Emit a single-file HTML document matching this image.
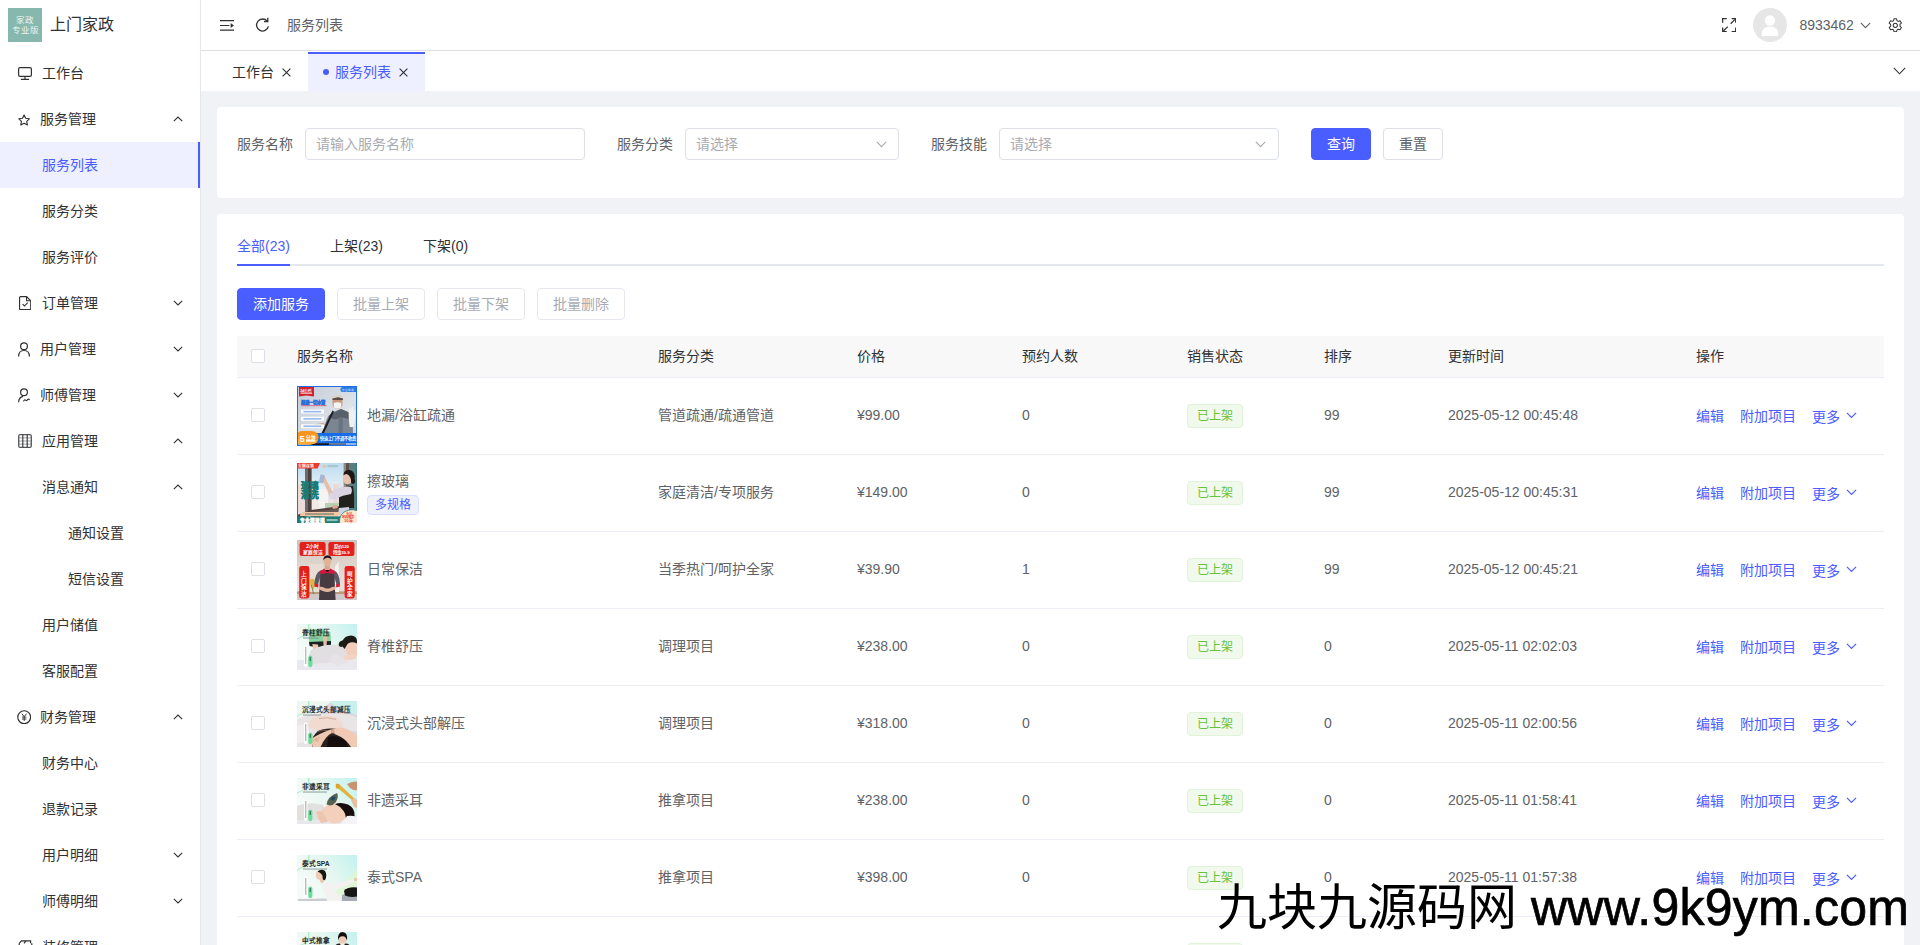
<!DOCTYPE html>
<html lang="zh-CN">
<head>
<meta charset="utf-8">
<title>服务列表</title>
<style>
*{box-sizing:border-box;margin:0;padding:0}
html,body{width:1920px;height:945px;overflow:hidden;background:#f0f2f5}
body{font-family:"Liberation Sans",sans-serif;font-size:14px;color:#303133;position:relative}
svg{display:block}
.abs{position:absolute}
/* ---------- sidebar ---------- */
#side{position:absolute;left:0;top:0;width:201px;height:945px;background:#fff;border-right:1px solid #e4e7ed;overflow:hidden}
#logo{position:absolute;left:8px;top:8px;width:34px;height:34px;background:#86b8ae;color:#eaf4f1;font-size:8.5px;line-height:10.2px;text-align:center;padding-top:6.7px;overflow:hidden;white-space:nowrap}
#brand{position:absolute;left:50px;top:0;height:50px;line-height:49px;font-size:16px;color:#303133;white-space:nowrap}
.mi{position:absolute;left:0;width:200px;height:46px;line-height:46px;font-size:14px;color:#303133;white-space:nowrap}
.mi .ic{position:absolute;top:15px}
.mi .tx{position:absolute;top:0}
.mi .ar{position:absolute;left:173px;top:20px}
.mi.on{background:#eef0ff;color:#4a5dff;border-right:2px solid #4a5dff}
/* ---------- header ---------- */
#head{position:absolute;left:201px;top:0;width:1719px;height:51px;background:#fff;border-bottom:1px solid #dcdfe6}
#tabs{position:absolute;left:201px;top:51px;width:1719px;height:40px;background:#fff}
.tab{position:absolute;top:0;height:40px;line-height:42px;font-size:14px;white-space:nowrap;color:#303133}
.tab.on{top:1px;background:#eef0ff;color:#4a5dff;border-top:2px solid #4a5dff;line-height:36px}
/* ---------- cards ---------- */
.card{position:absolute;left:217px;width:1687px;background:#fff;border-radius:4px}
.lbl{position:absolute;top:128px;height:32px;line-height:32px;font-size:14px;color:#606266;white-space:nowrap}
.inp{position:absolute;top:128px;height:32px;border:1px solid #dcdfe6;border-radius:4px;background:#fff;line-height:30px;font-size:14px;color:#a8abb2;padding-left:10px;white-space:nowrap}
.btn{position:absolute;height:32px;line-height:30px;border:1px solid #dcdfe6;border-radius:4px;font-size:14px;text-align:center;color:#606266;background:#fff;white-space:nowrap}
.btn.pri{background:#4a5dff;border-color:#4a5dff;color:#fff}
.btn.dis{color:#a8abb2;border-color:#e4e7ed}
/* ---------- table ---------- */
#thead{position:absolute;left:237px;top:336px;width:1647px;height:42px;background:#f8f8f9;border-bottom:1px solid #ebeef5}
.th{position:absolute;top:0;height:41px;line-height:40px;font-size:14px;color:#303133;white-space:nowrap}
.row{position:absolute;left:237px;width:1647px;height:77px;border-bottom:1px solid #ebeef5;font-size:14px;color:#606266}
.row .c{position:absolute;top:0;height:74px;line-height:74px;white-space:nowrap}
.cb{position:absolute;width:14px;height:14px;border:1px solid #dcdfe6;border-radius:2px;background:#fff}
.tag{position:absolute;left:950px;top:26px;width:56px;height:24px;line-height:22px;border:1px solid #e1f3d8;background:#f0f9eb;color:#67c23a;font-size:12px;text-align:center;border-radius:4px}
.lk{color:#4a5dff}
.thumb{position:absolute;left:60px;width:60px;overflow:hidden}
#wm{position:absolute;left:1217px;top:876px;font-size:50px;line-height:64px;color:#000;white-space:nowrap}
#wl{position:absolute;left:314px;top:0;display:block;letter-spacing:0.23px;-webkit-text-stroke:0.7px #000;transform:scale(1,1.04);transform-origin:0 50.3px}
</style>
</head>
<body>

<!-- ================= SIDEBAR ================= -->
<div id="side">
  <div id="logo">家政<br>专业版</div>
  <div id="brand">上门家政</div>
  <div class="mi" style="top:50px"><svg class="ic" style="left:18px;top:17px" width="14" height="13" viewBox="0 0 14 13"><rect x="0.6" y="0.6" width="12.8" height="8.7" rx="1.4" fill="none" stroke="#303133" stroke-width="1.2"/><path d="M7 9.4 V12.2 M2.9 12.3 H11.1" fill="none" stroke="#303133" stroke-width="1.2"/></svg><span class="tx" style="left:42px">工作台</span></div>
  <div class="mi" style="top:96px"><svg class="ic" style="left:18px;top:17.6px" width="12.2" height="12.2" viewBox="0 0 13 13"><path d="M6.5 1 L8.2 4.6 L12.1 5.1 L9.3 7.8 L10 11.7 L6.5 9.8 L3 11.7 L3.7 7.8 L0.9 5.1 L4.8 4.6 Z" fill="none" stroke="#303133" stroke-width="1.2" stroke-linejoin="round"/></svg><span class="tx" style="left:40px">服务管理</span><svg class="ar" width="10" height="6" viewBox="0 0 10 6"><path d="M0.8 5.2 L5 1 L9.2 5.2" fill="none" stroke="#303133" stroke-width="1.1"/></svg></div>
  <div class="mi on" style="top:142px"><span class="tx" style="left:42px">服务列表</span></div>
  <div class="mi" style="top:188px"><span class="tx" style="left:42px">服务分类</span></div>
  <div class="mi" style="top:234px"><span class="tx" style="left:42px">服务评价</span></div>
  <div class="mi" style="top:280px"><svg class="ic" style="left:19px;top:16px" width="12.3" height="14.2" viewBox="0 0 13 15"><path d="M0.6 1.6 Q0.6 0.6 1.6 0.6 H8 L12.4 5 V13.4 Q12.4 14.4 11.4 14.4 H1.6 Q0.6 14.4 0.6 13.4 Z" fill="none" stroke="#303133" stroke-width="1.2"/><path d="M8 0.6 V5 H12.4" fill="none" stroke="#303133" stroke-width="1.2"/><path d="M3.8 8.6 L5.8 10.6 L9.2 7" fill="none" stroke="#303133" stroke-width="1.2"/></svg><span class="tx" style="left:42px">订单管理</span><svg class="ar" width="10" height="6" viewBox="0 0 10 6"><path d="M0.8 0.8 L5 5 L9.2 0.8" fill="none" stroke="#303133" stroke-width="1.1"/></svg></div>
  <div class="mi" style="top:326px"><svg class="ic" style="left:17px;top:16px" width="14" height="15" viewBox="0 0 14 15"><circle cx="7" cy="4.2" r="3.4" fill="none" stroke="#303133" stroke-width="1.2"/><path d="M1.6 14.4 Q1.6 8.5 7 8.5 Q12.4 8.5 12.4 14.4" fill="none" stroke="#303133" stroke-width="1.2"/></svg><span class="tx" style="left:40px">用户管理</span><svg class="ar" width="10" height="6" viewBox="0 0 10 6"><path d="M0.8 0.8 L5 5 L9.2 0.8" fill="none" stroke="#303133" stroke-width="1.1"/></svg></div>
  <div class="mi" style="top:372px"><svg class="ic" style="left:17px;top:16px" width="14" height="15" viewBox="0 0 14 15"><circle cx="7" cy="4.2" r="3.4" fill="none" stroke="#303133" stroke-width="1.2"/><path d="M1.6 14.2 Q1.8 9.2 6 8.3" fill="none" stroke="#303133" stroke-width="1.2"/><path d="M6.4 13.4 Q7.4 11 8.6 12.2 Q9.6 13.2 10.6 11.6 Q11.6 10.4 12.6 12" fill="none" stroke="#303133" stroke-width="1.1"/></svg><span class="tx" style="left:40px">师傅管理</span><svg class="ar" width="10" height="6" viewBox="0 0 10 6"><path d="M0.8 0.8 L5 5 L9.2 0.8" fill="none" stroke="#303133" stroke-width="1.1"/></svg></div>
  <div class="mi" style="top:418px"><svg class="ic" style="left:18px;top:16px" width="14" height="14" viewBox="0 0 14 14"><rect x="0.7" y="0.7" width="12.6" height="12.6" rx="1.4" fill="none" stroke="#55575c" stroke-width="1.3"/><path d="M4.8 0.7 V13.3 M9.2 0.7 V13.3" fill="none" stroke="#303133" stroke-width="1.1"/><path d="M0.7 3.9 H13.3 M0.7 7 H13.3 M0.7 10.1 H13.3" fill="none" stroke="#303133" stroke-width="0.6" opacity="0.75"/></svg><span class="tx" style="left:42px">应用管理</span><svg class="ar" width="10" height="6" viewBox="0 0 10 6"><path d="M0.8 5.2 L5 1 L9.2 5.2" fill="none" stroke="#303133" stroke-width="1.1"/></svg></div>
  <div class="mi" style="top:464px"><span class="tx" style="left:42px">消息通知</span><svg class="ar" width="10" height="6" viewBox="0 0 10 6"><path d="M0.8 5.2 L5 1 L9.2 5.2" fill="none" stroke="#303133" stroke-width="1.1"/></svg></div>
  <div class="mi" style="top:510px"><span class="tx" style="left:68px">通知设置</span></div>
  <div class="mi" style="top:556px"><span class="tx" style="left:68px">短信设置</span></div>
  <div class="mi" style="top:602px"><span class="tx" style="left:42px">用户储值</span></div>
  <div class="mi" style="top:648px"><span class="tx" style="left:42px">客服配置</span></div>
  <div class="mi" style="top:694px"><svg class="ic" style="left:17px;top:16px" width="14.4" height="14.4" viewBox="0 0 15 15"><circle cx="7.5" cy="7.5" r="6.7" fill="none" stroke="#303133" stroke-width="1.2"/><path d="M5 3.8 L7.5 7 L10 3.8 M7.5 7 V11.4 M5.2 7.4 H9.8 M5.2 9.4 H9.8" fill="none" stroke="#303133" stroke-width="1"/></svg><span class="tx" style="left:40px">财务管理</span><svg class="ar" width="10" height="6" viewBox="0 0 10 6"><path d="M0.8 5.2 L5 1 L9.2 5.2" fill="none" stroke="#303133" stroke-width="1.1"/></svg></div>
  <div class="mi" style="top:740px"><span class="tx" style="left:42px">财务中心</span></div>
  <div class="mi" style="top:786px"><span class="tx" style="left:42px">退款记录</span></div>
  <div class="mi" style="top:832px"><span class="tx" style="left:42px">用户明细</span><svg class="ar" width="10" height="6" viewBox="0 0 10 6"><path d="M0.8 0.8 L5 5 L9.2 0.8" fill="none" stroke="#303133" stroke-width="1.1"/></svg></div>
  <div class="mi" style="top:878px"><span class="tx" style="left:42px">师傅明细</span><svg class="ar" width="10" height="6" viewBox="0 0 10 6"><path d="M0.8 0.8 L5 5 L9.2 0.8" fill="none" stroke="#303133" stroke-width="1.1"/></svg></div>
  <div class="mi" style="top:924px"><svg class="ic" style="left:18px;top:16px" width="15" height="15" viewBox="0 0 15 15"><path d="M1.2 3.4 V13.8 H13.8 V3.2 M1.2 3.4 L3.4 0.9 H12.6 V3.2 M8 0.9 L6 3.4" fill="none" stroke="#303133" stroke-width="1.2"/></svg><span class="tx" style="left:42px">装修管理</span></div>
</div>

<!-- ================= HEADER ================= -->
<div id="head">
  <svg class="abs" style="left:19px;top:18px" width="14" height="14" viewBox="0 0 14 14"><path d="M0 2.6 H14 M0 7.5 H9.4 M0 12.2 H14" fill="none" stroke="#303133" stroke-width="1.2"/><path d="M10.6 5 L14 7.5 L10.6 10 Z" fill="#303133"/></svg>
  <svg class="abs" style="left:54px;top:17px" width="15" height="16" viewBox="0 0 15 16"><path d="M12.2 4.2 A6 6 0 1 0 13.4 9.4" fill="none" stroke="#303133" stroke-width="1.3"/><path d="M12.8 0.8 V4.6 H9" fill="none" stroke="#303133" stroke-width="1.3"/></svg>
  <div class="abs" style="left:86px;top:0;height:50px;line-height:50px;font-size:14px;color:#606266;white-space:nowrap">服务列表</div>
  <svg class="abs" style="left:1521px;top:18px" width="14.4" height="14.4" viewBox="0 0 15 15"><path d="M0.7 5 V0.7 H5 M10 0.7 H14.3 V5 M14.3 10 V14.3 H10 M5 14.3 H0.7 V10" fill="none" stroke="#303133" stroke-width="1.3"/><path d="M9 6 L13.6 1.4 M6 9 L1.4 13.6" fill="none" stroke="#303133" stroke-width="1.3"/></svg>
  <div class="abs" style="left:1552px;top:8px;width:34px;height:34px;border-radius:50%;background:#e6e6e6;overflow:hidden">
    <svg width="34" height="34" viewBox="0 0 34 34"><circle cx="17" cy="12.5" r="5.2" fill="#fff"/><path d="M8.5 27 Q8.5 18.5 17 18.5 Q25.5 18.5 25.5 27 Q25.5 28 24.5 28 H9.5 Q8.5 28 8.5 27Z" fill="#fff"/></svg>
  </div>
  <div class="abs" style="left:1598.4px;top:0;height:50px;line-height:50px;font-size:14px;color:#606266">8933462</div>
  <svg class="abs" style="left:1659px;top:22px" width="11" height="7" viewBox="0 0 11 7"><path d="M0.8 0.8 L5.5 5.6 L10.2 0.8" fill="none" stroke="#606266" stroke-width="1.1"/></svg>
  <svg class="abs" style="left:1687.4px;top:17.6px" width="14.6" height="14.6" viewBox="0 0 16 16"><path d="M6.6 0.9 H9.4 L9.9 3 L11.2 3.7 L13.2 3 L14.7 5.5 L13.1 7 V8.9 L14.7 10.5 L13.2 13 L11.2 12.3 L9.9 13 L9.4 15.1 H6.6 L6.1 13 L4.8 12.3 L2.8 13 L1.3 10.5 L2.9 8.9 V7 L1.3 5.5 L2.8 3 L4.8 3.7 L6.1 3 Z" fill="none" stroke="#303133" stroke-width="1.1" stroke-linejoin="round"/><circle cx="8" cy="8" r="2.3" fill="none" stroke="#303133" stroke-width="1.1"/></svg>
</div>
<div id="tabs">
  <div class="tab" style="left:31px">工作台<svg style="display:inline-block;vertical-align:0.5px;margin-left:8px" width="9" height="9" viewBox="0 0 9 9"><path d="M0.6 0.6 L8.4 8.4 M8.4 0.6 L0.6 8.4" fill="none" stroke="#303133" stroke-width="1.15"/></svg></div>
  <div class="tab on" style="left:107px;width:117px;padding-left:15px"><span style="display:inline-block;width:6px;height:6px;border-radius:50%;background:#4a5dff;vertical-align:2px;margin-right:6px"></span>服务列表<svg style="display:inline-block;vertical-align:0.5px;margin-left:8px" width="9" height="9" viewBox="0 0 9 9"><path d="M0.6 0.6 L8.4 8.4 M8.4 0.6 L0.6 8.4" fill="none" stroke="#303133" stroke-width="1.15"/></svg></div>
  <svg class="abs" style="left:1692px;top:16px" width="13" height="8" viewBox="0 0 13 8"><path d="M0.8 0.8 L6.5 6.8 L12.2 0.8" fill="none" stroke="#303133" stroke-width="1.1"/></svg>
</div>

<!-- ================= SEARCH CARD ================= -->
<div class="card" style="top:107px;height:91px"></div>

<div class="lbl" style="left:237px">服务名称</div>
<div class="inp" style="left:305px;width:280px">请输入服务名称</div>
<div class="lbl" style="left:617px">服务分类</div>
<div class="inp" style="left:685px;width:214px;padding-left:10px">请选择<svg class="abs" style="right:11px;top:12px" width="11" height="7" viewBox="0 0 11 7"><path d="M0.8 0.8 L5.5 5.6 L10.2 0.8" fill="none" stroke="#a8abb2" stroke-width="1.1"/></svg></div>
<div class="lbl" style="left:931px">服务技能</div>
<div class="inp" style="left:999px;width:280px;padding-left:10px">请选择<svg class="abs" style="right:12.5px;top:12px" width="11" height="7" viewBox="0 0 11 7"><path d="M0.8 0.8 L5.5 5.6 L10.2 0.8" fill="none" stroke="#a8abb2" stroke-width="1.1"/></svg></div>
<div class="btn pri" style="left:1311px;top:128px;width:60px">查询</div>
<div class="btn" style="left:1383px;top:128px;width:60px">重置</div>


<!-- ================= LIST CARD ================= -->
<div class="card" style="top:214px;height:760px"></div>

<div class="abs" style="left:237px;top:264px;width:1647px;height:2px;background:#e4e7ed"></div>
<div class="abs" style="left:237px;top:264px;width:53px;height:2px;background:#4a5dff"></div>
<div class="abs" style="left:237px;top:234px;height:24px;line-height:24px;font-size:14px;color:#4a5dff;white-space:nowrap">全部(23)</div>
<div class="abs" style="left:330px;top:234px;height:24px;line-height:24px;font-size:14px;color:#303133;white-space:nowrap">上架(23)</div>
<div class="abs" style="left:423px;top:234px;height:24px;line-height:24px;font-size:14px;color:#303133;white-space:nowrap">下架(0)</div>
<div class="btn pri" style="left:237px;top:288px;width:88px">添加服务</div>
<div class="btn dis" style="left:337px;top:288px;width:88px">批量上架</div>
<div class="btn dis" style="left:437px;top:288px;width:88px">批量下架</div>
<div class="btn dis" style="left:537px;top:288px;width:88px">批量删除</div>
<div id="thead">
  <div class="cb" style="left:14px;top:13px"></div>
  <div class="th" style="left:60px">服务名称</div>
  <div class="th" style="left:421px">服务分类</div>
  <div class="th" style="left:620px">价格</div>
  <div class="th" style="left:785px">预约人数</div>
  <div class="th" style="left:950px">销售状态</div>
  <div class="th" style="left:1087px">排序</div>
  <div class="th" style="left:1211px">更新时间</div>
  <div class="th" style="left:1459px">操作</div>
</div>
<div class="row" style="top:378px"><div class="cb" style="left:14px;top:30px"></div><div class="thumb" style="top:8px;height:60px"><svg width="60" height="60" viewBox="0 0 60 60"><defs><filter id="b16933" x="-5%" y="-5%" width="110%" height="110%"><feGaussianBlur stdDeviation="0.45"/></filter>
<linearGradient id="t1g" x1="0" y1="0" x2="1" y2="1"><stop offset="0" stop-color="#c3ccd9"/><stop offset="0.6" stop-color="#dde1e8"/><stop offset="1" stop-color="#cfd5de"/></linearGradient>
</defs>
<rect width="60" height="60" fill="#1e6fe3"/>
<rect x="1" y="1" width="58" height="58" fill="url(#t1g)"/>
<g filter="url(#b16933)">
 <path d="M26.6 47 Q28 31 35 26.4 L44 23 L52 26.6 Q56 30 56 47 Z" fill="#7b8592"/>
 <path d="M33 28.4 L44 23 L52 26.6 Q54.6 29 55 34 L46 31.6 L38 33.6 L31.6 31.6 Z" fill="#59606b"/>
 <path d="M41.6 31 L46 31.4 L45.6 47 L41.6 47 Z" fill="#6a7380"/>
 <path d="M35.5 24.5 L37 25.5 L27 47 L24.5 47 Z" fill="#1d1f24"/>
 <rect x="35.5" y="9.5" width="10" height="13" rx="4.5" fill="#c89a7c"/>
 <path d="M34.5 13 Q35 8.6 40.5 8.4 Q46 8.6 46.3 12.6 L41 11.4 Z" fill="#d9d4cb"/>
 <path d="M35.3 12.4 L41 11.2 L46 12.6 L46 14 L35.5 14 Z" fill="#5b5148"/>
 <path d="M36.6 17 Q40.5 15.6 44.4 17 L44 21.6 Q40.5 23.6 37 21.6 Z" fill="#f4f4f2"/>
 <path d="M51.6 24 Q52 21 53.4 21.6 L54 25 L54.8 20.6 Q56 20 56.4 21.6 L56.8 25 L57.6 23 Q58.6 23 58.4 25 L58 34 Q58 39 56.4 41 L52.6 41 Q51.4 32 51.6 24 Z" fill="#f0f0ee"/>
 <path d="M17 38.6 L27 36.8 L28 38.8 L19 40.6 Z" fill="#c9a58f"/>
</g>
<path d="M2 1 H17 V10.6 L9.5 9.4 L2 10.6 Z" fill="#d3202c"/>
<text x="3.2" y="5.6" font-size="3.6" fill="#fff" font-family="Liberation Sans,sans-serif" font-weight="700">24小时</text>
<rect x="3.6" y="6.6" width="11.4" height="1" fill="#fff"/>
<path d="M46 1 H59 V6 H46 Q43.4 6 43.4 3.5 Q43.4 1 46 1Z" fill="#2b7ae6"/>
<text x="45" y="4.8" font-size="2.6" fill="#dbe9ff" font-family="Liberation Sans,sans-serif">专业疏通</text>
<text x="3.6" y="18" font-size="4.4" fill="#2a6fd9" stroke="#2a6fd9" stroke-width="0.3" font-family="Liberation Sans,sans-serif" font-weight="700">疏通一切水管</text>
<rect x="4" y="19.4" width="25.6" height="0.7" fill="#e0485a"/>
<rect x="4" y="23.6" width="23" height="4" rx="0.6" fill="#fff"/><rect x="6.4" y="24.8" width="18" height="1.7" fill="#9cbcf0"/>
<rect x="4" y="30.8" width="23" height="4" rx="0.6" fill="#fff"/><rect x="6.4" y="32" width="18" height="1.7" fill="#9cbcf0"/>
<rect x="4" y="38.2" width="23" height="4" rx="0.6" fill="#fff" opacity="0.92"/><rect x="6.4" y="39.4" width="18" height="1.7" fill="#9cbcf0"/>
<rect x="1" y="47" width="58" height="10.4" fill="#176de8"/>
<rect x="1" y="57.2" width="58" height="1.8" fill="#8fb6ef"/><rect x="14" y="57.2" width="18" height="1.8" fill="#10141c"/><rect x="32" y="57.2" width="17" height="1.8" fill="#5f7187"/>
<path d="M1 47.6 Q1 45 5 45 H14 Q21.6 45.4 21.6 51.6 Q21.4 58.2 14 58.4 H3 Q1 58.4 1 56.6 Z" fill="#f7941d"/>
<path d="M1 53 Q12 57 21 53.6 Q20 58.2 14 58.4 H3 Q1 58.4 1 56.6Z" fill="#fbb03b" opacity="0.8"/>
<text x="2.4" y="56" font-size="9.4" fill="#fff" font-family="Liberation Sans,sans-serif" font-weight="700">5</text>
<text x="8.6" y="52.6" font-size="4.6" fill="#fff" font-family="Liberation Sans,sans-serif" font-weight="700">分钟</text>
<rect x="9" y="53.6" width="9.4" height="2.2" rx="0.5" fill="#fff" opacity="0.9"/>
<text x="22.6" y="54.2" font-size="4.2" fill="#fff" font-family="Liberation Sans,sans-serif" font-weight="700">快速上门不通不收费</text>
</svg></div><div class="c" style="left:130px">地漏/浴缸疏通</div><div class="c" style="left:421px">管道疏通/疏通管道</div><div class="c" style="left:620px">¥99.00</div><div class="c" style="left:785px">0</div><div class="tag">已上架</div><div class="c" style="left:1087px">99</div><div class="c" style="left:1211px">2025-05-12 00:45:48</div><div class="c lk" style="left:1459px;top:1px">编辑</div><div class="c lk" style="left:1503px;top:1px">附加项目</div><div class="c lk" style="left:1575px;top:2px">更多<svg style="display:inline-block;margin-left:6px;vertical-align:4px" width="11" height="6.5" viewBox="0 0 10 6"><path d="M0.8 0.8 L5 5 L9.2 0.8" fill="none" stroke="#4a5dff" stroke-width="1.1"/></svg></div></div>
<div class="row" style="top:455px"><div class="cb" style="left:14px;top:30px"></div><div class="thumb" style="top:8px;height:60px"><svg width="60" height="60" viewBox="0 0 60 60"><defs><filter id="b39513" x="-5%" y="-5%" width="110%" height="110%"><feGaussianBlur stdDeviation="0.45"/></filter>
<linearGradient id="t2g" x1="0" y1="0" x2="0" y2="1"><stop offset="0" stop-color="#bcdcf1"/><stop offset="0.45" stop-color="#e9f1f5"/><stop offset="1" stop-color="#d7dfe0"/></linearGradient>
</defs>
<rect width="60" height="60" fill="url(#t2g)"/>
<g filter="url(#b39513)">
 <rect x="1" y="21" width="9" height="28" fill="#ecd9d6" opacity="0.9"/>
 <rect x="14" y="22" width="8" height="28" fill="#f1ebe8"/>
 <rect x="22" y="26" width="10" height="22" fill="#f4f3f1"/>
 <rect x="31" y="20" width="4" height="24" fill="#e6e4e6"/><rect x="36" y="21" width="5" height="22" fill="#edd8d6"/><rect x="41" y="20" width="4" height="22" fill="#dfe4ea"/>
 <rect x="28" y="40" width="14" height="6" fill="#b9d0b4"/>
 <rect x="8" y="5" width="3" height="45" fill="#6c6a6e"/><rect x="11" y="5" width="3.6" height="45" fill="#4d3f3c"/>
 <rect x="46.6" y="0" width="2.6" height="50" fill="#8d8a86"/><rect x="49" y="0" width="3" height="50" fill="#5f5048"/>
 <rect x="52" y="0" width="8" height="56" fill="#557f83"/>
 <path d="M0 52 L14 47 L44 43 L44 47 L14 52 L0 57 Z" fill="#54423f"/>
 <path d="M14 49 L44 45.6 L44 50 L14 56 Z" fill="#6b5a55"/>
 <!-- woman -->
 <path d="M42 31 Q42 24.6 48 24 L56 23 Q57.6 30 57 45 L42 45 Z" fill="#24201f"/>
 <path d="M32 30 Q40 24 50 23.4 L53.6 24 Q56 27 54 31 Q46 32 38 36 Q33 37 32 34 Z" fill="#d9d3e2"/>
 <path d="M24 14 L27.4 13 L36 30 L33 33.6 Z" fill="#e3bfae"/>
 <rect x="22.6" y="11.6" width="4.6" height="8.6" rx="1" fill="#a7b6d4" transform="rotate(12 25 16)"/>
 <path d="M32 34 Q32.6 30 35 29.6 L37 34.6 Q34 36.6 32 34Z" fill="#ddd6e4"/>
 <ellipse cx="50.6" cy="15.6" rx="4.6" ry="6" fill="#e9c2ae"/>
 <path d="M46.4 12 Q47 6.6 52.6 7 Q58.6 8.4 57.6 16 Q59.4 20 56 21 Q53.6 20.6 54 17 Q53 12 49.4 11 Z" fill="#1d1715"/>
 <path d="M42 45 L52 44 L52 52 L41 52 Z" fill="#cfd3e2"/>
 <path d="M35 43.4 Q37 41.4 40 42.4 L41 45 L36 46 Z" fill="#d8a892"/>
</g>
<text x="4.2" y="26.2" font-size="8.6" fill="#1c7a73" stroke="#1c7a73" stroke-width="0.45" font-family="Liberation Sans,sans-serif" font-weight="700">玻璃</text>
<text x="4.2" y="35" font-size="8.6" fill="#1c7a73" stroke="#1c7a73" stroke-width="0.45" font-family="Liberation Sans,sans-serif" font-weight="700">清洗</text>
<rect x="0" y="0" width="1" height="60" fill="#2c7c77"/><rect x="59.2" y="0" width="0.8" height="60" fill="#2c7c77"/>
<path d="M0 0 H23 L20.6 5.4 H0 Z" fill="#e93a2b"/>
<text x="1.4" y="4.4" font-size="3.8" fill="#fff" font-family="Liberation Sans,sans-serif" font-weight="700">全国连锁</text>
<circle cx="27.4" cy="3.2" r="1.8" fill="#f0c2a0"/><rect x="30.4" y="2" width="10.6" height="2.2" fill="#9fc3c7" opacity="0.8"/>
<path d="M3 53 Q3 49 7 49 H43 L41 53.4 Z" fill="#f6c7a6"/>
<rect x="8" y="50" width="29" height="2.1" fill="#8e8a78" opacity="0.75"/>
<rect x="0" y="53.4" width="60" height="6.6" fill="#1f7a72"/>
<text x="2.6" y="58.8" font-size="4.7" fill="#fff" stroke="#fff" stroke-width="0.25" font-family="Liberation Sans,sans-serif" font-weight="700">专业擦玻璃</text>
<rect x="29.6" y="56" width="11" height="2.2" fill="#8cc0ba"/>
<path d="M42.4 60 Q42 50 51 47.2 Q56 46 60 47.6 V60 Z" fill="#fbe9d3"/>
<path d="M42.4 60 Q42 50 51 47.2 Q56 46 60 47.6" fill="none" stroke="#2c7c77" stroke-width="0.8"/>
<text x="48.6" y="51.6" font-size="3.4" fill="#e8402f" font-family="Liberation Sans,sans-serif" font-weight="700">专注</text>
<text x="45" y="55.2" font-size="3.3" fill="#e8402f" font-family="Liberation Sans,sans-serif" font-weight="700">家政服务</text>
<text x="47" y="59.4" font-size="4.2" fill="#e8402f" font-family="Liberation Sans,sans-serif" font-weight="700">10年</text>
</svg></div><div class="c" style="left:130px;top:16px;height:20px;line-height:20px">擦玻璃</div><div class="abs" style="left:130px;top:40px;width:52px;height:20px;line-height:18px;border:1px solid #d9ddff;background:#eef0ff;color:#4a5dff;font-size:12px;text-align:center;border-radius:4px">多规格</div><div class="c" style="left:421px">家庭清洁/专项服务</div><div class="c" style="left:620px">¥149.00</div><div class="c" style="left:785px">0</div><div class="tag">已上架</div><div class="c" style="left:1087px">99</div><div class="c" style="left:1211px">2025-05-12 00:45:31</div><div class="c lk" style="left:1459px;top:1px">编辑</div><div class="c lk" style="left:1503px;top:1px">附加项目</div><div class="c lk" style="left:1575px;top:2px">更多<svg style="display:inline-block;margin-left:6px;vertical-align:4px" width="11" height="6.5" viewBox="0 0 10 6"><path d="M0.8 0.8 L5 5 L9.2 0.8" fill="none" stroke="#4a5dff" stroke-width="1.1"/></svg></div></div>
<div class="row" style="top:532px"><div class="cb" style="left:14px;top:30px"></div><div class="thumb" style="top:8px;height:60px"><svg width="60" height="60" viewBox="0 0 60 60"><defs><filter id="b50849" x="-5%" y="-5%" width="110%" height="110%"><feGaussianBlur stdDeviation="0.45"/></filter>
<linearGradient id="t3g" x1="0" y1="0" x2="0" y2="1"><stop offset="0" stop-color="#c9c3c1"/><stop offset="0.35" stop-color="#ddd3cb"/><stop offset="0.8" stop-color="#e9e0d7"/><stop offset="1" stop-color="#d6cdc9"/></linearGradient>
</defs>
<rect width="60" height="60" fill="url(#t3g)"/>
<g filter="url(#b50849)">
 <rect x="0" y="51.4" width="60" height="3" fill="#b89a7c"/><rect x="0" y="54.4" width="60" height="5.6" fill="#cfc9cc"/>
 <rect x="12" y="24" width="14" height="28" fill="#e7ddd4"/>
 <path d="M38 27 L41.6 21.6 L42 52 L37 52 Z" fill="#f7f4f0"/>
 <rect x="24" y="52" width="6" height="8" fill="#f1eeee"/>
 <path d="M12.6 40 Q15 37.6 17.6 40 Q19 45 16.6 49.6 Q13 49 12.6 40Z" fill="#d3bd4a"/>
 <path d="M14.4 45 L16.6 54" stroke="#6f8a3a" stroke-width="0.9"/>
 <!-- man -->
 <path d="M17.4 44 Q18 33 23.4 30.6 L30.4 29 L37.4 30.6 Q42.4 33 43 44 L40 46.6 L37.6 38 L37.6 60 L22.6 60 L22.6 38 L20.6 46.6 Z" fill="#5e5868"/>
 <path d="M23.6 33 L37 33 L38.6 60 L22 60 Z" fill="#443b40"/>
 <path d="M22.6 31.6 L27.6 28.4 L30.4 31 L33.4 28.4 L38 31.6 L36.6 34.6 L30.4 32.4 L24 34.6 Z" fill="#d8163c"/>
 <path d="M28.6 30.6 L30.4 32.6 L32.4 30.6 L31.4 29.4 L29.6 29.4 Z" fill="#1c181b"/>
 <path d="M17.6 43.4 L21.6 44.6 L21 47.6 L17.4 46.4 Z" fill="#dc1a3c"/><path d="M42.8 43.4 L38.8 44.6 L39.4 47.6 L43 46.4 Z" fill="#dc1a3c"/>
 <path d="M21.4 46.6 Q26 46.6 29 48.6 L32 48.6 Q35 46.6 39 46.6 L38 49.6 Q33 52.4 30.4 52 Q27 52.4 22.4 49.6 Z" fill="#e2b49c"/>
 <rect x="27.8" y="24" width="5" height="6" fill="#d5a78f"/>
 <ellipse cx="30.4" cy="21.6" rx="3.7" ry="4.8" fill="#e0b298"/>
 <path d="M26.4 20.6 Q26 15.4 30.6 15.2 Q35 15.4 34.6 20.6 Q33.6 17.6 30.4 17.8 Q27.4 17.6 26.4 20.6Z" fill="#1b1513"/>
</g>
<rect x="2.6" y="2" width="26" height="14" rx="2.2" fill="#e2211a"/>
<rect x="31.4" y="2" width="26" height="14" rx="2.2" fill="#e2211a"/>
<rect x="2.2" y="26" width="10.2" height="32.4" rx="2.4" fill="#e2211a"/>
<rect x="47.6" y="26" width="10.2" height="32.4" rx="2.4" fill="#e2211a"/>
<text x="15.6" y="8" font-size="4.8" fill="#fff" text-anchor="middle" font-family="Liberation Sans,sans-serif" font-weight="700">2小时</text>
<text x="15.6" y="14" font-size="4.8" fill="#fff" text-anchor="middle" font-family="Liberation Sans,sans-serif" font-weight="700">家庭保洁</text>
<text x="44.4" y="8" font-size="4.4" fill="#fff" text-anchor="middle" font-family="Liberation Sans,sans-serif" font-weight="700">原价120</text>
<text x="44.4" y="14" font-size="4.4" fill="#fff" text-anchor="middle" font-family="Liberation Sans,sans-serif" font-weight="700">特惠39.9</text>
<text x="7.3" y="36" font-size="5.6" fill="#fff" text-anchor="middle" font-family="Liberation Sans,sans-serif" font-weight="700">上</text>
<text x="7.3" y="42.6" font-size="5.6" fill="#fff" text-anchor="middle" font-family="Liberation Sans,sans-serif" font-weight="700">门</text>
<text x="7.3" y="49.2" font-size="5.6" fill="#fff" text-anchor="middle" font-family="Liberation Sans,sans-serif" font-weight="700">保</text>
<text x="7.3" y="55.8" font-size="5.6" fill="#fff" text-anchor="middle" font-family="Liberation Sans,sans-serif" font-weight="700">洁</text>
<text x="52.7" y="36" font-size="5.6" fill="#fff" text-anchor="middle" font-family="Liberation Sans,sans-serif" font-weight="700">呵</text>
<text x="52.7" y="42.6" font-size="5.6" fill="#fff" text-anchor="middle" font-family="Liberation Sans,sans-serif" font-weight="700">护</text>
<text x="52.7" y="49.2" font-size="5.6" fill="#fff" text-anchor="middle" font-family="Liberation Sans,sans-serif" font-weight="700">全</text>
<text x="52.7" y="55.8" font-size="5.6" fill="#fff" text-anchor="middle" font-family="Liberation Sans,sans-serif" font-weight="700">家</text>
</svg></div><div class="c" style="left:130px">日常保洁</div><div class="c" style="left:421px">当季热门/呵护全家</div><div class="c" style="left:620px">¥39.90</div><div class="c" style="left:785px">1</div><div class="tag">已上架</div><div class="c" style="left:1087px">99</div><div class="c" style="left:1211px">2025-05-12 00:45:21</div><div class="c lk" style="left:1459px;top:1px">编辑</div><div class="c lk" style="left:1503px;top:1px">附加项目</div><div class="c lk" style="left:1575px;top:2px">更多<svg style="display:inline-block;margin-left:6px;vertical-align:4px" width="11" height="6.5" viewBox="0 0 10 6"><path d="M0.8 0.8 L5 5 L9.2 0.8" fill="none" stroke="#4a5dff" stroke-width="1.1"/></svg></div></div>
<div class="row" style="top:609px"><div class="cb" style="left:14px;top:30px"></div><div class="thumb" style="top:15px;height:46px"><svg width="60" height="46" viewBox="0 0 60 46"><defs><filter id="b43770" x="-5%" y="-5%" width="110%" height="110%"><feGaussianBlur stdDeviation="0.45"/></filter>
<linearGradient id="lg4" x1="0" y1="0.55" x2="1" y2="0"><stop offset="0" stop-color="#f6fbf9"/><stop offset="0.5" stop-color="#e6f7f0"/><stop offset="1" stop-color="#c2f2ee"/></linearGradient>
</defs><rect width="60" height="46" fill="url(#lg4)"/><rect x="11" y="0" width="1.4" height="7" fill="#a9e8c6" opacity="0.9"/><path d="M0 14.6 L10 9.6 L10 10.8 L0 15.8 Z" fill="#a9e8c6" opacity="0.8"/>
<g filter="url(#b43770)">
 <rect x="0" y="36" width="60" height="10" fill="#e9e8ee"/>
 <path d="M11.4 6 Q22 3 33.4 8.6 L34 18 L12 19 Z" fill="#86d6a0"/>
 <path d="M12 18 L34 17 L34 21.6 Q23 25 12.6 22 Z" fill="#1e2422"/>
 <path d="M15.4 20 L21 20.6 L22.6 30 Q19.6 32.6 16.6 29 Z" fill="#efc5b1"/>
 <path d="M26 12 L30 12 L29.6 22 L26.6 22.6 Z" fill="#e9bfa9"/>
 <path d="M14 26 Q30 18 47 22 L50 30 Q44 36 36 38.6 L14 40 Q10 33 14 26 Z" fill="#e2dfe2"/>
 <path d="M36 30 Q46 32 52 38 L40 42 L33 37 Z" fill="#e6e2e6"/>
 <path d="M47.4 23 Q48 16.6 54 15.6 Q60 16 60 22 L60 32 Q54 35.6 50 31.4 Z" fill="#f1cdbb"/>
 <path d="M41.6 21 Q41.6 17 45.6 16.4 Q48 11.6 54 11.4 Q59.6 11.6 60 16.6 L60 19.6 Q55.6 16.8 51 19.4 Q49 22 47.6 25 Q46 23.6 45.6 22.6 Q42.6 23.6 41.6 21Z" fill="#1f1a19"/>
 <path d="M46 32 Q52 29.6 59 31 L59.6 34.6 Q53 37 47.6 35.6 Z" fill="#f3d3c3"/>
</g><text x="5.4" y="10.8" font-size="6.7" fill="#1d2a2c" font-family="Liberation Sans,sans-serif" font-weight="700">脊柱舒压</text><rect x="6" y="13.2" width="16" height="1.7" fill="#7d8b8b" opacity="0.5"/><rect x="7" y="21.4" width="3.4" height="21.6" rx="1.7" fill="#fff"/><rect x="8.2" y="23" width="1.1" height="17" fill="#8d9a96" opacity="0.8"/><rect x="11.2" y="31.6" width="4.2" height="11.6" rx="2.1" fill="#6cdc9a"/><rect x="12.6" y="33" width="1.4" height="4" fill="#2c5a44" opacity="0.7"/></svg></div><div class="c" style="left:130px">脊椎舒压</div><div class="c" style="left:421px">调理项目</div><div class="c" style="left:620px">¥238.00</div><div class="c" style="left:785px">0</div><div class="tag">已上架</div><div class="c" style="left:1087px">0</div><div class="c" style="left:1211px">2025-05-11 02:02:03</div><div class="c lk" style="left:1459px;top:1px">编辑</div><div class="c lk" style="left:1503px;top:1px">附加项目</div><div class="c lk" style="left:1575px;top:2px">更多<svg style="display:inline-block;margin-left:6px;vertical-align:4px" width="11" height="6.5" viewBox="0 0 10 6"><path d="M0.8 0.8 L5 5 L9.2 0.8" fill="none" stroke="#4a5dff" stroke-width="1.1"/></svg></div></div>
<div class="row" style="top:686px"><div class="cb" style="left:14px;top:30px"></div><div class="thumb" style="top:15px;height:46px"><svg width="60" height="46" viewBox="0 0 60 46"><defs><filter id="b15995" x="-5%" y="-5%" width="110%" height="110%"><feGaussianBlur stdDeviation="0.45"/></filter>
<linearGradient id="lg5" x1="0" y1="0.55" x2="1" y2="0"><stop offset="0" stop-color="#f6fbf9"/><stop offset="0.5" stop-color="#e6f7f0"/><stop offset="1" stop-color="#c2f2ee"/></linearGradient>
</defs><rect width="60" height="46" fill="#ddd7dc"/><path d="M30 0 H60 V14 Q46 10 30 0Z" fill="#c9f1ea"/><path d="M0 0 H34 L20 16 L0 22 Z" fill="#eef6f2"/>
<rect x="11" y="0" width="1.4" height="7" fill="#a9e8c6" opacity="0.9"/><path d="M0 14.6 L10 9.6 L10 10.8 L0 15.8 Z" fill="#a9e8c6" opacity="0.8"/>
<g filter="url(#b15995)">
 <path d="M0 18 Q14 12 34 13 Q52 11 60 17 L60 30 L0 36 Z" fill="#e9e4e5"/>
 <path d="M11 25 Q13 15 28 14.6 Q43 14.6 46 24 Q45 29 28 29.6 Q14 30 11 25Z" fill="#f1dbd0"/>
 <path d="M22 17.6 Q30 15.6 39 18.4" stroke="#c7a594" stroke-width="0.8" fill="none"/>
 <path d="M16 36 Q20 27.6 33 27.6 Q48 27 54 35 L57 46 L15 46 Z" fill="#2c2423"/>
 <path d="M31 36 Q40 33 49 40 L51 46 L30 46Z" fill="#15100f"/>
 <path d="M20 31 Q26 28 31 30" stroke="#6d5348" stroke-width="1.2" fill="none"/>
 <path d="M14.6 38 Q20 33.6 33.6 28.6 L35.4 31.6 Q28 35.6 23.6 46 L15.4 46 Z" fill="#efc8b2"/>
 <path d="M15 40 Q19 36 23 35.6 L21 40.6 Z" fill="#e3b49d"/>
 <path d="M36 28.6 Q42 25.6 47 27 Q56 30 60 35 L60 46 L54 46 Q50 39.6 44 36 Q40 34 37.6 33 Z" fill="#f0cab5"/>
 <path d="M33.6 28.4 L37 27.8 L37.6 32.6 L34.6 32.2 Z" fill="#d8a38d"/>
 <path d="M0 25 Q8 22 11 26 L13.6 40 L0 44 Z" fill="#f1eef0"/>
 <path d="M0 42 L14 40 L15 46 L0 46Z" fill="#e7e3e6"/>
</g><text x="5.4" y="10.8" font-size="6.7" fill="#1d2a2c" font-family="Liberation Sans,sans-serif" font-weight="700">沉浸式头部减压</text><rect x="6" y="13.2" width="18" height="1.7" fill="#7d8b8b" opacity="0.5"/><rect x="7" y="21.4" width="3.4" height="21.6" rx="1.7" fill="#fff"/><rect x="8.2" y="23" width="1.1" height="17" fill="#8d9a96" opacity="0.8"/><rect x="11.2" y="31.6" width="4.2" height="11.6" rx="2.1" fill="#6cdc9a"/><rect x="12.6" y="33" width="1.4" height="4" fill="#2c5a44" opacity="0.7"/></svg></div><div class="c" style="left:130px">沉浸式头部解压</div><div class="c" style="left:421px">调理项目</div><div class="c" style="left:620px">¥318.00</div><div class="c" style="left:785px">0</div><div class="tag">已上架</div><div class="c" style="left:1087px">0</div><div class="c" style="left:1211px">2025-05-11 02:00:56</div><div class="c lk" style="left:1459px;top:1px">编辑</div><div class="c lk" style="left:1503px;top:1px">附加项目</div><div class="c lk" style="left:1575px;top:2px">更多<svg style="display:inline-block;margin-left:6px;vertical-align:4px" width="11" height="6.5" viewBox="0 0 10 6"><path d="M0.8 0.8 L5 5 L9.2 0.8" fill="none" stroke="#4a5dff" stroke-width="1.1"/></svg></div></div>
<div class="row" style="top:763px"><div class="cb" style="left:14px;top:30px"></div><div class="thumb" style="top:15px;height:46px"><svg width="60" height="46" viewBox="0 0 60 46"><defs><filter id="b82077" x="-5%" y="-5%" width="110%" height="110%"><feGaussianBlur stdDeviation="0.45"/></filter>
<linearGradient id="lg6" x1="0" y1="0.55" x2="1" y2="0"><stop offset="0" stop-color="#f6fbf9"/><stop offset="0.5" stop-color="#e6f7f0"/><stop offset="1" stop-color="#c2f2ee"/></linearGradient>
</defs><rect width="60" height="46" fill="url(#lg6)"/><rect x="11" y="0" width="1.4" height="7" fill="#a9e8c6" opacity="0.9"/><path d="M0 14.6 L10 9.6 L10 10.8 L0 15.8 Z" fill="#a9e8c6" opacity="0.8"/>
<g filter="url(#b82077)">
 <path d="M0 28 Q12 23 26 27 L30 38 L28 46 L0 46 Z" fill="#e3e1df"/>
 <path d="M0 42 H60 V46 H0Z" fill="#e8e8ec"/>
 <path d="M24 33 Q30 24.6 41 26 Q50 27 50 36 Q48 44 38 45.6 Q28 45 24 33Z" fill="#f2d0bc"/>
 <path d="M19 34 Q24 31 27 36 L31 44 L24 45 Q20 40 19 34Z" fill="#edc6b0"/>
 <path d="M38 26 Q44 23.6 51 26.6 Q58 30 57.6 38 Q56 45 48 45.6 Q50 38 46.6 33 Q43 28 38 26Z" fill="#16110f"/>
 <path d="M50 38 Q60 37 60 41 L60 46 L44 46 Z" fill="#f4f3f5"/>
 <path d="M29.6 26.6 Q30 19 40 15 Q42 18 39 24 Q35 29 29.6 26.6Z" fill="#59634f"/>
 <ellipse cx="36" cy="20.4" rx="2.4" ry="1.9" fill="#1f4a6a" transform="rotate(-35 36 20.4)"/>
 <path d="M39.4 6.8 L42 6 L57.4 20.6 L55.6 22.6 L41.2 10.4 Z" fill="#e3b23d"/>
 <rect x="38.8" y="5.8" width="3.6" height="4.6" rx="0.8" fill="#d9a52e"/>
 <path d="M50 6 Q55 3.6 60 3.6 L60 12 Q56 13 52.6 9.6 Z" fill="#c9926f"/>
 <path d="M54 22 L58 20 L60 22 L60 30 L57 29 Z" fill="#e9c09e"/>
</g><text x="5.4" y="10.8" font-size="6.7" fill="#1d2a2c" font-family="Liberation Sans,sans-serif" font-weight="700">非遗采耳</text><rect x="6" y="13.2" width="24" height="1.7" fill="#7d8b8b" opacity="0.5"/><rect x="7" y="21.4" width="3.4" height="21.6" rx="1.7" fill="#fff"/><rect x="8.2" y="23" width="1.1" height="17" fill="#8d9a96" opacity="0.8"/><rect x="11.2" y="31.6" width="4.2" height="11.6" rx="2.1" fill="#6cdc9a"/><rect x="12.6" y="33" width="1.4" height="4" fill="#2c5a44" opacity="0.7"/></svg></div><div class="c" style="left:130px">非遗采耳</div><div class="c" style="left:421px">推拿项目</div><div class="c" style="left:620px">¥238.00</div><div class="c" style="left:785px">0</div><div class="tag">已上架</div><div class="c" style="left:1087px">0</div><div class="c" style="left:1211px">2025-05-11 01:58:41</div><div class="c lk" style="left:1459px;top:1px">编辑</div><div class="c lk" style="left:1503px;top:1px">附加项目</div><div class="c lk" style="left:1575px;top:2px">更多<svg style="display:inline-block;margin-left:6px;vertical-align:4px" width="11" height="6.5" viewBox="0 0 10 6"><path d="M0.8 0.8 L5 5 L9.2 0.8" fill="none" stroke="#4a5dff" stroke-width="1.1"/></svg></div></div>
<div class="row" style="top:840px"><div class="cb" style="left:14px;top:30px"></div><div class="thumb" style="top:15px;height:46px"><svg width="60" height="46" viewBox="0 0 60 46"><defs><filter id="b42485" x="-5%" y="-5%" width="110%" height="110%"><feGaussianBlur stdDeviation="0.45"/></filter>
<linearGradient id="lg7" x1="0" y1="0.55" x2="1" y2="0"><stop offset="0" stop-color="#f6fbf9"/><stop offset="0.5" stop-color="#e6f7f0"/><stop offset="1" stop-color="#c2f2ee"/></linearGradient>
</defs><rect width="60" height="46" fill="url(#lg7)"/><rect x="11" y="0" width="1.4" height="7" fill="#a9e8c6" opacity="0.9"/><path d="M0 14.6 L10 9.6 L10 10.8 L0 15.8 Z" fill="#a9e8c6" opacity="0.8"/>
<path d="M30 46 L60 14 L60 30 L44 46 Z" fill="#e3f6cf" opacity="0.7"/>
<g filter="url(#b42485)">
 <path d="M1 44 L60 43 L60 46 L1 46Z" fill="#c9cdd2"/>
 <path d="M45 40 Q52 36 60 37.6 L60 46 L45 46 Z" fill="#a4a9b2"/>
 <path d="M47 36 Q50 31.6 60 32.4 L60 41.6 Q52 42.6 48 40.6 Z" fill="#131313"/>
 <path d="M23 25.6 Q27 24 30 27.6 Q38 30 46 27 L58 24 L60 25.6 L47 31.6 Q40 34 34 33.6 L44 42 L45 46 L30 46 Q28 36 23 25.6Z" fill="#f4f2f0"/>
 <path d="M56.6 24 Q58 22 60 23 L60 26 L57.6 26.6Z" fill="#edc7b1"/>
 <path d="M22.6 24 L25.6 23 L27 27 L24 28 Z" fill="#e9c2ac"/>
 <ellipse cx="22.8" cy="20" rx="4" ry="4.8" fill="#efcbb6"/>
 <path d="M20.6 16.4 Q24 13.4 28 16 Q30.6 20 28 25 Q25.6 26 25.6 22.6 Q26 18.6 20.6 16.4Z" fill="#18120f"/>
</g><text x="5.4" y="10.8" font-size="6.7" fill="#1d2a2c" font-family="Liberation Sans,sans-serif" font-weight="700">泰式SPA</text><rect x="6" y="13.2" width="24" height="1.7" fill="#7d8b8b" opacity="0.5"/><rect x="7" y="21.4" width="3.4" height="21.6" rx="1.7" fill="#fff"/><rect x="8.2" y="23" width="1.1" height="17" fill="#8d9a96" opacity="0.8"/><rect x="11.2" y="31.6" width="4.2" height="11.6" rx="2.1" fill="#6cdc9a"/><rect x="12.6" y="33" width="1.4" height="4" fill="#2c5a44" opacity="0.7"/></svg></div><div class="c" style="left:130px">泰式SPA</div><div class="c" style="left:421px">推拿项目</div><div class="c" style="left:620px">¥398.00</div><div class="c" style="left:785px">0</div><div class="tag">已上架</div><div class="c" style="left:1087px">0</div><div class="c" style="left:1211px">2025-05-11 01:57:38</div><div class="c lk" style="left:1459px;top:1px">编辑</div><div class="c lk" style="left:1503px;top:1px">附加项目</div><div class="c lk" style="left:1575px;top:2px">更多<svg style="display:inline-block;margin-left:6px;vertical-align:4px" width="11" height="6.5" viewBox="0 0 10 6"><path d="M0.8 0.8 L5 5 L9.2 0.8" fill="none" stroke="#4a5dff" stroke-width="1.1"/></svg></div></div>
<div class="row" style="top:917px"><div class="cb" style="left:14px;top:30px"></div><div class="thumb" style="top:15px;height:46px"><svg width="60" height="46" viewBox="0 0 60 46"><defs><filter id="b98066" x="-5%" y="-5%" width="110%" height="110%"><feGaussianBlur stdDeviation="0.45"/></filter>
<linearGradient id="lg8" x1="0" y1="0.55" x2="1" y2="0"><stop offset="0" stop-color="#f6fbf9"/><stop offset="0.5" stop-color="#e6f7f0"/><stop offset="1" stop-color="#c2f2ee"/></linearGradient>
</defs><rect width="60" height="46" fill="url(#lg8)"/><rect x="11" y="0" width="1.4" height="7" fill="#a9e8c6" opacity="0.9"/><path d="M0 14.6 L10 9.6 L10 10.8 L0 15.8 Z" fill="#a9e8c6" opacity="0.8"/>
<g filter="url(#b98066)">
 <ellipse cx="45.4" cy="8.6" rx="3.7" ry="4.8" fill="#efcbb6"/>
 <path d="M41 8.4 Q40.4 0.2 45.6 0 Q51 0.4 50 8.4 Q48.6 3.8 45.4 4.2 Q42.4 4 41 8.4Z" fill="#15100e"/>
 <path d="M37 17 Q38 11 42.6 11.4 L45.4 15 L48.4 11.4 Q53 11 54.6 17 L55 30 L36.6 30 Z" fill="#1b1a1c"/>
 <path d="M43.4 11.6 L45.4 15.4 L47.6 11.6 Z" fill="#f3f1ef"/>
</g>
<text x="5.4" y="10.8" font-size="6.7" fill="#1d2a2c" font-family="Liberation Sans,sans-serif" font-weight="700">中式推拿</text>
</svg></div><div class="c" style="left:130px">中式推拿</div><div class="c" style="left:421px">推拿项目</div><div class="c" style="left:620px">¥198.00</div><div class="c" style="left:785px">0</div><div class="tag">已上架</div><div class="c" style="left:1087px">0</div><div class="c" style="left:1211px">2025-05-11 01:56:12</div><div class="c lk" style="left:1459px;top:1px">编辑</div><div class="c lk" style="left:1503px;top:1px">附加项目</div><div class="c lk" style="left:1575px;top:2px">更多<svg style="display:inline-block;margin-left:6px;vertical-align:4px" width="11" height="6.5" viewBox="0 0 10 6"><path d="M0.8 0.8 L5 5 L9.2 0.8" fill="none" stroke="#4a5dff" stroke-width="1.1"/></svg></div></div>

<div id="wm">九块九源码网<span id="wl">www.9k9ym.com</span></div>
</body>
</html>
